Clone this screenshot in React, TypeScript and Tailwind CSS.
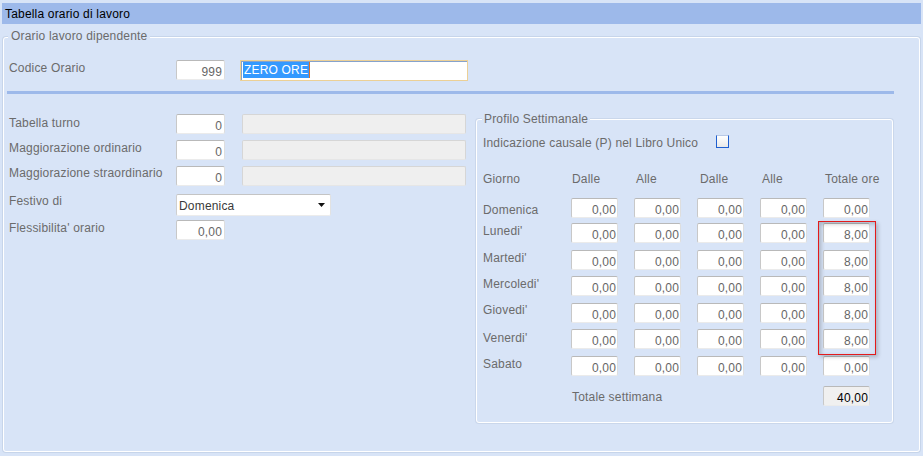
import React from "react";

const LBL = "text-[#6b6b6b] leading-[14px] whitespace-nowrap";
const INP =
  "box-border h-[20px] border border-t-[#b9b9b9] border-l-[#c8c8c8] border-r-[#dedede] border-b-[#ebebeb] rounded-[2px] pt-[4px] leading-[14px] text-right whitespace-nowrap";

function LeftRow({
  label,
  labelMt,
  rowMt,
  children,
}: {
  label: string;
  labelMt: string;
  rowMt: string;
  children: React.ReactNode;
}) {
  return (
    <div className={"flex items-start " + rowMt}>
      <div className={"w-[167px] " + LBL + " " + labelMt}>{label}</div>
      {children}
    </div>
  );
}

const days: { name: string; tot: string; rowMt: string; labelMt: string }[] = [
  { name: "Domenica", tot: "0,00", rowMt: "mt-[12px]", labelMt: "mt-[5px]" },
  { name: "Lunedi'", tot: "8,00", rowMt: "mt-[5px]", labelMt: "mt-[1px]" },
  { name: "Martedi'", tot: "8,00", rowMt: "mt-[7px]", labelMt: "mt-[1px]" },
  { name: "Mercoledi'", tot: "8,00", rowMt: "mt-[6px]", labelMt: "mt-[1px]" },
  { name: "Giovedi'", tot: "8,00", rowMt: "mt-[7px]", labelMt: "mt-[0px]" },
  { name: "Venerdi'", tot: "8,00", rowMt: "mt-[6px]", labelMt: "mt-[2px]" },
  { name: "Sabato", tot: "0,00", rowMt: "mt-[7px]", labelMt: "mt-[1px]" },
];

function Cell({ v, strong }: { v: string; strong?: boolean }) {
  return (
    <div
      className={
        INP +
        " w-[47px] pr-[1px] " +
        (strong ? "bg-[#f0f0f0] text-black" : "bg-white text-[#666666]")
      }
    >
      {v}
    </div>
  );
}

export default function App() {
  return (
    <div className="w-[923px] h-[456px] overflow-hidden bg-[#d8e4f7] font-['Liberation_Sans',Arial,sans-serif] text-[12px] tracking-[0.18px] pt-[3px]">
      {/* title bar */}
      <div className="mx-[2px] h-[21px] bg-[#9db9ea] pl-[3px] pt-[4px] leading-[14px] text-black whitespace-nowrap">
        Tabella orario di lavoro
      </div>

      {/* outer group */}
      <div className="box-border ml-[3px] mt-[13px] w-[917px] h-[415px] border border-white rounded-[3px] shadow-[0_0_0_1px_rgba(170,185,210,0.35)]">
        <div className="-mt-[9px] ml-[4px] w-fit px-[3px] bg-[#d8e4f7] text-[#6b6b6b] leading-[14px] whitespace-nowrap">
          Orario lavoro dipendente
        </div>

        {/* Codice Orario */}
        <div className="mt-[17px] pl-[5px] flex items-start">
          <div className={"w-[167px] mt-[1px] " + LBL}>Codice Orario</div>
          <div className={INP + " w-[49px] pr-[2px] bg-white text-[#666666]"}>999</div>
          <div className="box-border ml-[15px] w-[228px] h-[21px] border border-[#ecd096] bg-white shadow-[inset_1px_1px_0_#86a2cc] pl-[2px] pt-[1px] flex items-start">
            <span className="inline-block h-[16px] leading-[16px] px-[1px] bg-[#3399ff] text-white whitespace-nowrap">
              ZERO ORE
            </span>
            <span className="inline-block w-[1px] h-[16px] bg-[#d9702a]" />
          </div>
        </div>

        {/* separator */}
        <div className="mt-[10px] ml-[3px] w-[887px] h-[3px] bg-[#9db9ea]" />

        {/* lower section */}
        <div className="flex items-start">
          {/* left column */}
          <div className="w-[472px] pl-[5px] pt-[20px]">
            <LeftRow label="Tabella turno" labelMt="mt-[2px]" rowMt="mt-0">
              <div className={INP + " w-[49px] pr-[2px] bg-white text-[#666666]"}>0</div>
              <div className="box-border ml-[17px] w-[224px] h-[20px] border border-[#d6d6d6] border-b-[#e6e6e6] rounded-[2px] bg-[#efefef]" />
            </LeftRow>
            <LeftRow label="Maggiorazione ordinario" labelMt="mt-[1px]" rowMt="mt-[6px]">
              <div className={INP + " w-[49px] pr-[2px] bg-white text-[#666666]"}>0</div>
              <div className="box-border ml-[17px] w-[224px] h-[20px] border border-[#d6d6d6] border-b-[#e6e6e6] rounded-[2px] bg-[#efefef]" />
            </LeftRow>
            <LeftRow label="Maggiorazione straordinario" labelMt="mt-0" rowMt="mt-[6px]">
              <div className={INP + " w-[49px] pr-[2px] bg-white text-[#666666]"}>0</div>
              <div className="box-border ml-[17px] w-[224px] h-[20px] border border-[#d6d6d6] border-b-[#e6e6e6] rounded-[2px] bg-[#efefef]" />
            </LeftRow>
            <LeftRow label="Festivo di" labelMt="mt-0" rowMt="mt-[8px]">
              <div className="box-border w-[155px] h-[22px] border border-t-[#c4c4c4] border-l-[#cfcfcf] border-r-[#e2e2e2] border-b-[#ececec] rounded-[2px] bg-white pl-[2px] pr-[4px] flex items-center justify-between">
                <span className="text-[#3a3a3a] leading-[14px] pt-[1px]">Domenica</span>
                <svg width="8" height="5" viewBox="0 0 8 5">
                  <path d="M0 0 H7 L3.5 4 Z" fill="#111" />
                </svg>
              </div>
            </LeftRow>
            <LeftRow label="Flessibilita' orario" labelMt="mt-[1px]" rowMt="mt-[4px]">
              <div className={INP + " w-[49px] pr-[2px] bg-white text-[#666666]"}>0,00</div>
            </LeftRow>
          </div>

          {/* Profilo Settimanale */}
          <div className="relative box-border mt-[25px] w-[417px] h-[304px] border border-white rounded-[3px] shadow-[0_0_0_1px_rgba(170,185,210,0.3)]">
            <div className="-mt-[8px] ml-[5px] w-fit px-[2px] bg-[#d8e4f7] text-[#6b6b6b] leading-[14px] whitespace-nowrap">
              Profilo Settimanale
            </div>

            <div className="ml-[6px]">
              <div className="mt-[9px] flex items-start">
                <div className={"w-[233px] mt-[1px] " + LBL}>
                  Indicazione causale (P) nel Libro Unico
                </div>
                <div className="box-border w-[13px] h-[13px] border border-[#1f5fd0] border-t-[#b9c9e6] bg-linear-to-b from-white to-[#e9e9e9]" />
              </div>

              {/* header */}
              <div className="mt-[22px] flex items-start h-[14px]">
                <div className={"w-[88px] " + LBL}>Giorno</div>
                <div className="flex gap-[16px]">
                  <div className={"w-[47px] pl-[1px] " + LBL}>Dalle</div>
                  <div className={"w-[47px] pl-[2px] " + LBL}>Alle</div>
                  <div className={"w-[47px] pl-[3px] " + LBL}>Dalle</div>
                  <div className={"w-[47px] pl-[2px] " + LBL}>Alle</div>
                  <div className={"w-[47px] pl-[2px] " + LBL}>Totale ore</div>
                </div>
              </div>

              {days.map((d) => (
                <div key={d.name} className={"flex items-start " + d.rowMt}>
                  <div className={"w-[88px] " + LBL + " " + d.labelMt}>{d.name}</div>
                  <div className="flex gap-[16px]">
                    <Cell v="0,00" />
                    <Cell v="0,00" />
                    <Cell v="0,00" />
                    <Cell v="0,00" />
                    <Cell v={d.tot} />
                  </div>
                </div>
              ))}

              <div className="mt-[10px] flex items-start">
                <div className="w-[88px]" />
                <div className={"w-[252px] mt-[4px] pl-[1px] " + LBL}>Totale settimana</div>
                <Cell v="40,00" strong />
              </div>
            </div>

            {/* red annotation box */}
            <div className="absolute left-[341px] top-[101px] w-[58px] h-[134px] border border-[#e41b1b] shadow-[2px_2px_4px_rgba(0,0,0,0.22),inset_2px_2px_4px_rgba(0,0,0,0.22)]" />
          </div>
        </div>
      </div>
    </div>
  );
}
